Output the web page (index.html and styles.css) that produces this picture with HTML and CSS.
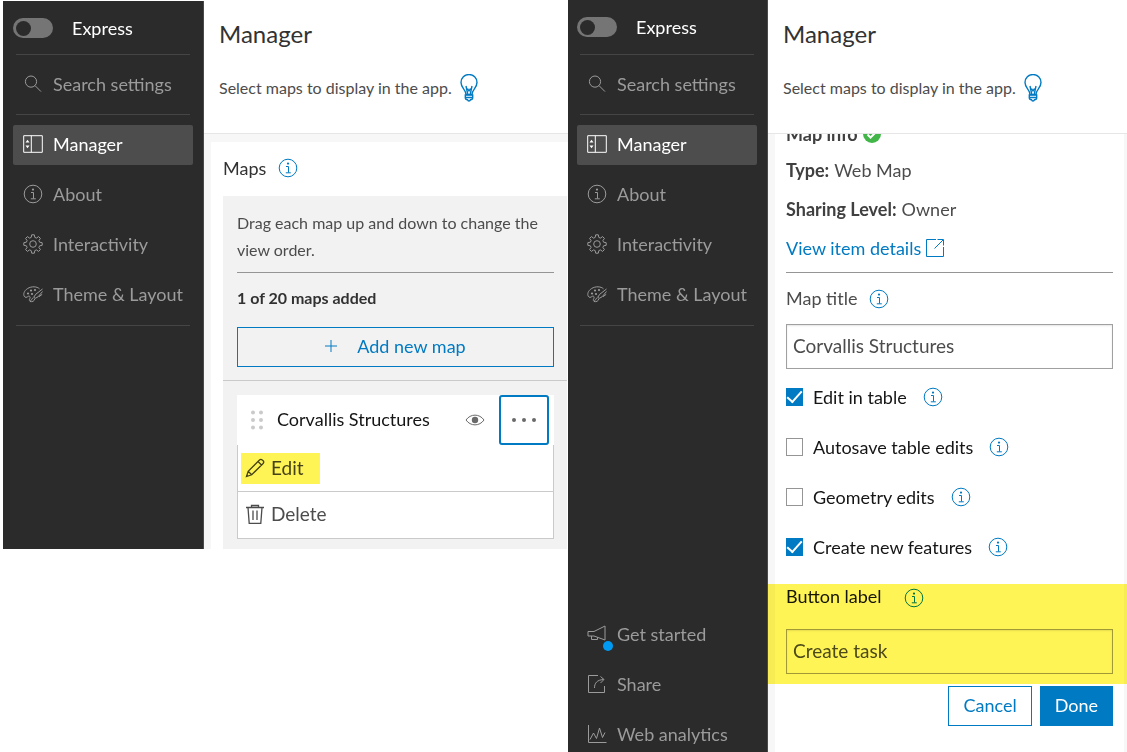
FILE: index.html
```
<!DOCTYPE html>
<html lang="en">
<head>
    <meta charset="UTF-8">
    <meta name="viewport" content="width=device-width, initial-scale=1.0">
    <title>Manager</title>
    <link rel="stylesheet" href="styles.css">
</head>
<body>
    <!-- shared icons -->
    <svg class="sprite" aria-hidden="true">
        <symbol id="info" viewBox="0 0 20 20">
            <circle cx="10" cy="10" r="8.8"/>
            <path d="M8 8.5h2.5v6M7.8 14.8h5"/>
            <circle class="dot" cx="10" cy="5.6" r="1.1"/>
        </symbol>
        <symbol id="search" viewBox="0 0 20 20">
            <circle cx="8" cy="7.6" r="5.6"/>
            <path d="M12 11.6l6 6"/>
        </symbol>
        <symbol id="manager" viewBox="0 0 20 20">
            <path d="M.7 1.7h18.6v16.6H.7zM8.3 1.7v16.6"/>
            <path class="dot" d="M4.5 5.8l2 2.7h-4zM4.5 14.2l2-2.7h-4z"/>
        </symbol>
        <symbol id="gear" viewBox="0 0 20 20">
            <circle cx="10" cy="10" r="3.3"/>
            <path d="M8.7.8h2.6l.5 2.6 1.6.7 2.2-1.5 1.8 1.8-1.5 2.2.7 1.6 2.6.5v2.6l-2.6.5-.7 1.6 1.5 2.2-1.8 1.8-2.2-1.5-1.6.7-.5 2.6H8.7l-.5-2.6-1.6-.7-2.2 1.5-1.8-1.8 1.5-2.2-.7-1.6-2.6-.5V8.7l2.6-.5.7-1.6-1.5-2.2 1.8-1.8 2.2 1.5 1.6-.7z"/>
        </symbol>
        <symbol id="palette" viewBox="0 0 20 20">
            <path d="M16.5 4.8C14 2.4 8.5 2 4.5 4.6 1 6.9.2 10 1.2 12.2c.9 1.7 2.8 1.2 3.6.4 1-.9 2.6-.4 2.3 1-.3 1.5-1.3 2.2-.6 3.2"/>
            <path d="M19.5 5l-6.8 5.3-1.9 2.9 1.3 1.2 3-1.6L19.5 7.5M10.5 13.8c-1.7 0-1.7 2.8-3.6 3.7 2.3.6 4.7-.4 4.8-2.7M16 12.7l3.2-2.4"/>
            <circle class="dot" cx="5" cy="9.5" r="1.1"/>
            <circle class="dot" cx="8" cy="6.5" r="1.1"/>
            <circle class="dot" cx="12" cy="6" r="1.1"/>
            <circle class="dot" cx="9" cy="10" r="1.1"/>
        </symbol>
        <symbol id="bulb" viewBox="0 0 18 28">
            <path d="M6 20.5c0-5-5-6.5-5-12A8 8 0 0 1 17 8.5c0 5.5-5 7-5 12z"/>
            <path d="M6 12l1.7 8M12 12l-1.7 8M7.5 14.5L9 17l1.5-2.5M5.3 21h7.4v2.5H5.3zM5.3 23.5c0 2 1.2 2.3 2.2 2.3.5 1.6 2.5 1.6 3 0 1 0 2.2-.3 2.2-2.3"/>
        </symbol>
    </svg>

    <main class="screens">
        <!-- map list -->
        <section class="app app-list">
            <aside class="sidebar">
                <label class="express">
                    <input type="checkbox" role="switch">
                    Express
                </label>
                <a class="search" href="#"><svg class="icon"><use href="#search"/></svg>Search settings</a>
                <nav>
                    <a class="active" href="#"><svg class="icon"><use href="#manager"/></svg>Manager</a>
                    <a href="#"><svg class="icon"><use href="#info"/></svg>About</a>
                    <a href="#"><svg class="icon"><use href="#gear"/></svg>Interactivity</a>
                    <a href="#"><svg class="icon"><use href="#palette"/></svg>Theme &amp; Layout</a>
                </nav>
            </aside>
            <div class="content">
                <header>
                    <h1>Manager</h1>
                    <p>Select maps to display in the app. <svg class="bulb"><use href="#bulb"/></svg></p>
                </header>
                <div class="panel maps-panel">
                    <h2>Maps <svg class="icon blue"><use href="#info"/></svg></h2>
                    <div class="map-box">
                        <div class="map-top">
                            <p class="hint">Drag each map up and down to change the view order.</p>
                            <p class="count">1 of 20 maps added</p>
                            <button class="add"><svg class="plus" viewBox="0 0 12 12"><path d="M6 0v12M0 6h12"/></svg>Add new map</button>
                        </div>
                        <div class="map-items">
                            <div class="map-item">
                                <svg class="grip" viewBox="0 0 12 20">
                                    <circle cx="2" cy="2.5" r="2"/><circle cx="10" cy="2.5" r="2"/>
                                    <circle cx="2" cy="10" r="2"/><circle cx="10" cy="10" r="2"/>
                                    <circle cx="2" cy="17.5" r="2"/><circle cx="10" cy="17.5" r="2"/>
                                </svg>
                                <span>Corvallis Structures</span>
                                <svg class="eye" viewBox="0 0 20 12">
                                    <path d="M1 6c4.5-6.5 13.5-6.5 18 0-4.5 6.5-13.5 6.5-18 0z"/>
                                    <circle class="dot" cx="10" cy="6" r="3.2"/>
                                </svg>
                                <button class="more" aria-label="More options">
                                    <svg viewBox="0 0 26 6"><circle cx="3" cy="3" r="2"/><circle cx="13" cy="3" r="2"/><circle cx="23" cy="3" r="2"/></svg>
                                </button>
                            </div>
                            <div class="menu">
                                <button><span class="marked"><svg class="icon" viewBox="0 0 20 20"><path d="M1.5 18.5l1.7-5.2L14.5 2c.8-.8 1.9-.8 2.7-.1l.9.9c.8.8.7 1.9 0 2.7L6.7 16.8zM3.2 13.3l3.5 3.5M13 3.5L16.5 7"/></svg>Edit</span></button>
                                <button><span><svg class="icon" viewBox="0 0 20 20"><path d="M1 3.5h18M6.5 3.5v-2h7v2M3 3.5l1.2 15.8h11.6L17 3.5M8 6.5V16M12 6.5V16"/></svg>Delete</span></button>
                            </div>
                        </div>
                    </div>
                </div>
            </div>
        </section>

        <!-- map settings -->
        <section class="app app-edit">
            <aside class="sidebar">
                <label class="express">
                    <input type="checkbox" role="switch">
                    Express
                </label>
                <a class="search" href="#"><svg class="icon"><use href="#search"/></svg>Search settings</a>
                <nav>
                    <a class="active" href="#"><svg class="icon"><use href="#manager"/></svg>Manager</a>
                    <a href="#"><svg class="icon"><use href="#info"/></svg>About</a>
                    <a href="#"><svg class="icon"><use href="#gear"/></svg>Interactivity</a>
                    <a href="#"><svg class="icon"><use href="#palette"/></svg>Theme &amp; Layout</a>
                </nav>
                <nav class="bottom">
                    <a class="notify" href="#"><svg class="icon" viewBox="0 0 20 20"><path d="M1 7.5h6L18 2v14L7 12H1zM4.5 12v3.5h6v-2.2"/></svg>Get started</a>
                    <a href="#"><svg class="icon" viewBox="0 0 20 20"><path d="M11 1.5H1.5v17h16V12M7.5 14c0-5 2.5-8 9-8.5M13.5 2.5l3.5 3-3.5 3.5"/></svg>Share</a>
                    <a href="#"><svg class="icon" viewBox="0 0 20 20"><path d="M1.5 1v17.5h18M3 15.5L6.5 9l3 5.5L12.5 4l3 9.5L18 8.5"/></svg>Web analytics</a>
                </nav>
            </aside>
            <div class="content">
                <header>
                    <h1>Manager</h1>
                    <p>Select maps to display in the app. <svg class="bulb"><use href="#bulb"/></svg></p>
                </header>
                <div class="panel edit-panel">
                    <div class="info-lines">
                        <p class="map-info"><b>Map info</b> <svg class="ok" viewBox="0 0 18 18"><circle cx="9" cy="9" r="9"/><path d="M4.5 9.5l3 3 6-6"/></svg></p>
                        <p><b>Type:</b> Web Map</p>
                        <p><b>Sharing Level:</b> Owner</p>
                        <p><a href="#">View item details<svg class="icon" viewBox="0 0 20 20"><path d="M11 1.5H1.5v17h17V9M9.5 10.5L18 2M12.5 1.5h6v6"/></svg></a></p>
                    </div>
                    <div class="field">
                        <label for="map-title">Map title</label>
                        <svg class="icon blue"><use href="#info"/></svg>
                        <input type="text" id="map-title" value="Corvallis Structures">
                    </div>
                    <div class="options">
                        <div><label><input type="checkbox" checked>Edit in table</label><svg class="icon blue"><use href="#info"/></svg></div>
                        <div><label><input type="checkbox">Autosave table edits</label><svg class="icon blue"><use href="#info"/></svg></div>
                        <div><label><input type="checkbox">Geometry edits</label><svg class="icon blue"><use href="#info"/></svg></div>
                        <div><label><input type="checkbox" checked>Create new features</label><svg class="icon blue"><use href="#info"/></svg></div>
                    </div>
                    <div class="field label-field">
                        <label for="button-label">Button label</label>
                        <svg class="icon blue"><use href="#info"/></svg>
                        <input type="text" id="button-label" value="Create task">
                    </div>
                    <div class="actions">
                        <button class="cancel">Cancel</button>
                        <button class="done">Done</button>
                    </div>
                </div>
            </div>
        </section>
    </main>
</body>
</html>
```
FILE: styles.css
```
* {
    box-sizing: border-box;
}
body {
    margin: 0;
    font-family: Lato, "Open Sans", sans-serif;
    font-size: 18px;
    line-height: 24px;
    color: #4c4c4c;
    background-color: #fff;
}
h1, h2, p {
    margin: 0;
    font-weight: normal;
}
a {
    color: #007ac2;
    text-decoration: none;
}
button, input {
    font: inherit;
    color: inherit;
    margin: 0;
}
button {
    cursor: pointer;
    background: none;
}
svg {
    fill: none;
    stroke: currentColor;
    flex: none;
}
.sprite {
    display: none;
}
.dot {
    fill: currentColor;
    stroke: none;
}
.icon {
    width: 20px;
    height: 20px;
}
.blue {
    color: #007ac2;
}

.screens {
    display: grid;
    grid-template-columns: 565fr 559fr;
    align-items: start;
    height: 100vh;
    padding-left: 3px;
    overflow: hidden;
}
.app {
    display: flex;
}
.app-list {
    margin-top: 1px;
}
.app-edit {
    height: 100vh;
}

/* sidebar */
.sidebar {
    flex: 0 0 201px;
    padding: 0 10px;
    color: #9b9b9b;
    background-color: #2b2b2b;
    border-right: 1px solid #4a4a4a;
    overflow: hidden;
}
.app-edit .sidebar {
    flex-basis: 200px;
    padding-left: 9px;
}
.express {
    display: flex;
    align-items: center;
    gap: 19px;
    height: 54px;
    color: #fff;
}
.app-list .express {
    height: 53px;
}
.express input {
    appearance: none;
    width: 40px;
    height: 20px;
    padding: 3px;
    border-radius: 10px;
    background-color: #757575;
}
.express input::before {
    content: "";
    display: block;
    width: 15px;
    height: 15px;
    border-radius: 50%;
    background-color: #2b2b2b;
}
.sidebar a {
    display: flex;
    align-items: center;
    gap: 10px;
    height: 40px;
    padding: 0 0 2px 10px;
    color: inherit;
}
.sidebar .search {
    height: 61px;
    margin: 0 3px;
    padding-left: 7px;
    border-top: 1px solid #454545;
    border-bottom: 1px solid #454545;
}
nav {
    display: grid;
    gap: 10px;
    padding-top: 10px;
}
.sidebar .active {
    color: #fff;
    background-color: #4d4d4d;
    border-radius: 2px;
}
.sidebar nav::after {
    content: "";
    margin: 0 3px;
    border-top: 1px solid #454545;
}
nav.bottom {
    padding-top: 289px;
}
.notify {
    position: relative;
}
.notify::before {
    content: "";
    position: absolute;
    left: 26px;
    top: 26px;
    width: 10px;
    height: 10px;
    border-radius: 50%;
    background-color: #009af2;
}

/* content */
.content {
    flex: 1;
    min-width: 0;
    display: flex;
    flex-direction: column;
    background-color: #f7f7f7;
}
/* stays above the scrolled panel */
header {
    position: relative;
    z-index: 1;
    height: 134px;
    padding: 20px 15px;
    background-color: #fff;
    border-bottom: 1px solid #e6e6e6;
}
.app-list header {
    height: 133px;
    padding-top: 19px;
}
h1 {
    font-size: 24px;
    line-height: 28px;
    margin-bottom: 25px;
    color: #323232;
}
header p {
    display: flex;
    align-items: center;
    gap: 8px;
    font-size: 16px;
    line-height: 30px;
}
.bulb {
    width: 18px;
    height: 28px;
    color: #007ac2;
    stroke-width: 1.4;
}
.panel {
    background-color: #fff;
}

/* map list */
.maps-panel {
    margin: 8px 0 0 7px;
    padding-left: 12px;
}
h2 {
    display: flex;
    align-items: center;
    gap: 12px;
    height: 54px;
    padding-bottom: 2px;
    font-size: 18px;
    color: #323232;
}
.map-box {
    margin-right: 1px;
    background-color: #f2f2f2;
}
.map-top {
    padding: 13px 13px 13px 14px;
    border-bottom: 1px solid #cacaca;
}
.hint {
    padding-bottom: 9px;
    font-size: 16px;
    line-height: 27px;
    border-bottom: 1px solid #959595;
}
.count {
    padding: 13px 0 17px;
    font-size: 16px;
    font-weight: bold;
    color: #323232;
}
.add {
    display: flex;
    align-items: center;
    justify-content: center;
    gap: 20px;
    width: 100%;
    height: 40px;
    padding: 0 0 2px;
    color: #007ac2;
    border: 1px solid #007ac2;
}
.plus {
    width: 12px;
    height: 12px;
}
.map-items {
    padding: 14px 13px 10px 14px;
}
.map-item {
    display: flex;
    align-items: center;
    height: 50px;
    padding: 0 5px 0 14px;
    color: #151515;
    background-color: #fff;
}
.map-item span {
    flex: 1;
    margin-left: 14px;
    padding-bottom: 2px;
}
.grip {
    width: 12px;
    height: 20px;
    fill: #cacaca;
    stroke: none;
}
.eye {
    width: 20px;
    height: 12px;
    color: #6a6a6a;
}
.more {
    display: flex;
    align-items: center;
    justify-content: center;
    width: 50px;
    height: 50px;
    margin-left: 14px;
    padding: 0;
    border: 2px solid #007ac2;
    border-radius: 3px;
}
.more svg {
    width: 26px;
    height: 6px;
    fill: #6a6a6a;
    stroke: none;
}
.menu {
    border: 1px solid #cacaca;
    border-top: 0;
    background-color: #fff;
}
.menu button {
    display: block;
    width: 100%;
    height: 46px;
    padding: 0 3px;
    border: 0;
    text-align: left;
}
.menu button + button {
    height: 47px;
    padding-bottom: 2px;
    border-top: 1px solid #cacaca;
}
.menu span {
    display: inline-flex;
    align-items: center;
    gap: 6px;
    height: 31px;
    padding: 0 16px 0 4px;
    font-size: 19px;
}
.menu .icon {
    stroke-width: 1.3;
}
.marked {
    color: #454217;
    background-color: #fff455;
}

/* map settings */
.edit-panel {
    flex: 1;
    margin: 0 3px 0 7px;
    padding: 0 11px;
}
.info-lines {
    margin-top: -17px;
    padding-bottom: 5px;
    border-bottom: 1px solid #959595;
}
.info-lines p {
    display: flex;
    align-items: center;
    gap: 5px;
    height: 39px;
}
.info-lines .map-info {
    height: 33px;
}
.info-lines a {
    display: flex;
    align-items: center;
    gap: 4px;
}
.info-lines b {
    color: #404040;
}
.ok {
    width: 18px;
    height: 18px;
    fill: #43b649;
    stroke: none;
}
.ok path {
    fill: none;
    stroke: #fff;
    stroke-width: 2;
}
.field {
    display: grid;
    grid-template-columns: auto 1fr;
    align-items: center;
    column-gap: 12px;
}
.field label {
    line-height: 51px;
}
.field input {
    grid-column: 1 / 3;
    width: 100%;
    height: 45px;
    padding: 0 6px 3px;
    font-size: 19px;
    border: 1px solid #a0a0a0;
    border-radius: 0;
    background-color: transparent;
    box-shadow: inset 0 1px 2px rgba(0, 0, 0, 0.1);
}
.options {
    padding: 3px 0 12px;
    color: #151515;
}
.options div {
    display: flex;
    align-items: center;
    gap: 16px;
    height: 50px;
}
.options label {
    display: flex;
    align-items: center;
    gap: 10px;
}
.options input {
    appearance: none;
    display: grid;
    place-items: center;
    width: 17px;
    height: 18px;
    border: 1px solid #959595;
}
.options input:checked {
    background-color: #007ac2;
    border-color: #007ac2;
}
.options input:checked::before {
    content: "";
    width: 13px;
    height: 6px;
    border: solid #fff;
    border-width: 0 0 2px 2px;
    transform: translateY(-2px) rotate(-48deg);
}
.label-field {
    position: relative;
    padding-bottom: 10px;
    column-gap: 22px;
}
.label-field label {
    line-height: 24px;
    padding-bottom: 21px;
    color: #151515;
}
.label-field .icon {
    margin-bottom: 18px;
}
/* marker colour over the whole width of the panel */
.label-field::after {
    content: "";
    position: absolute;
    inset: 0 -14px 0 -18px;
    background-color: #fff455;
    mix-blend-mode: multiply;
    pointer-events: none;
}
.actions {
    display: flex;
    justify-content: flex-end;
    gap: 8px;
    padding-top: 2px;
}
.actions button {
    height: 40px;
    padding: 0 14px 2px;
    color: #007ac2;
    border: 1px solid #007ac2;
}
.actions .done {
    color: #fff;
    background-color: #007ac2;
}
```
